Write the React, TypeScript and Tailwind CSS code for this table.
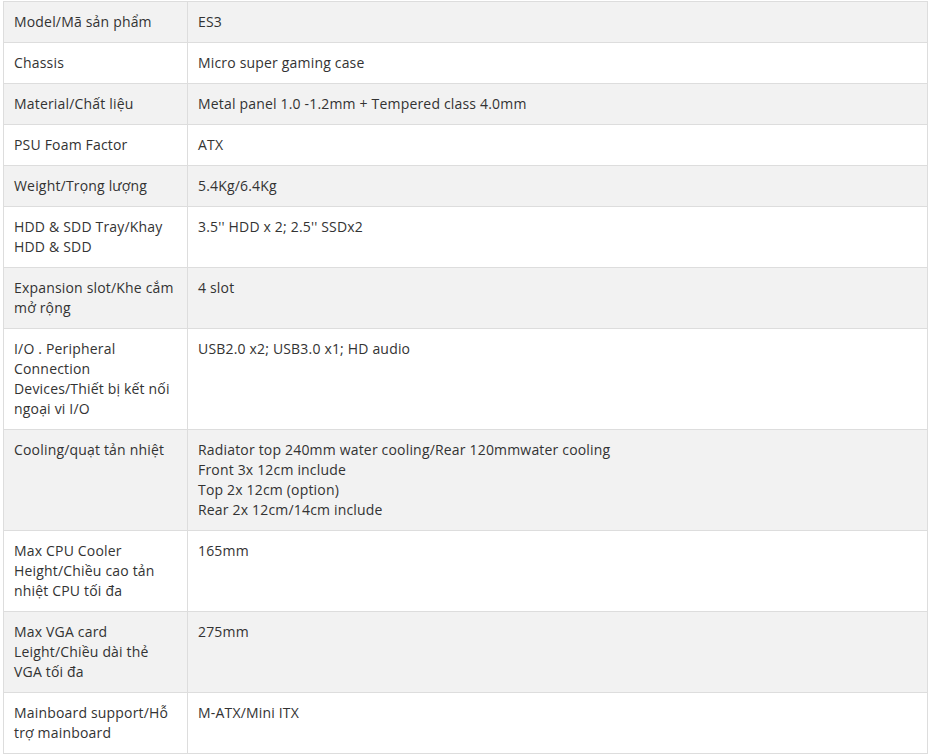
const rows: [string, string[]][] = [
  ["Model/Mã sản phẩm", ["ES3"]],
  ["Chassis", ["Micro super gaming case"]],
  ["Material/Chất liệu", ["Metal panel 1.0 -1.2mm + Tempered class 4.0mm"]],
  ["PSU Foam Factor", ["ATX"]],
  ["Weight/Trọng lượng", ["5.4Kg/6.4Kg"]],
  ["HDD & SDD Tray/Khay HDD & SDD", ["3.5'' HDD x 2; 2.5'' SSDx2"]],
  ["Expansion slot/Khe cắm mở rộng", ["4 slot"]],
  ["I/O . Peripheral Connection Devices/Thiết bị kết nối ngoại vi I/O", ["USB2.0 x2; USB3.0 x1; HD audio"]],
  [
    "Cooling/quạt tản nhiệt",
    [
      "Radiator top 240mm water cooling/Rear 120mmwater cooling",
      "Front 3x 12cm include",
      "Top 2x 12cm (option)",
      "Rear 2x 12cm/14cm include",
    ],
  ],
  ["Max CPU Cooler Height/Chiều cao tản nhiệt CPU tối đa", ["165mm"]],
  ["Max VGA card Leight/Chiều dài thẻ VGA tối đa", ["275mm"]],
  ["Mainboard support/Hỗ trợ mainboard", ["M-ATX/Mini ITX"]],
];

export default function App() {
  return (
    <div className="min-h-screen bg-white pl-[3px] pt-px font-['Open_Sans',sans-serif] text-[14px] leading-5 tracking-[0.18px] text-[#333]">
      <table className="w-[925px] table-fixed border-collapse border border-[#ddd]">
        <colgroup>
          <col className="w-[184px]" />
          <col />
        </colgroup>
        <tbody>
          {rows.map(([label, value], i) => (
            <tr key={label} className={i % 2 === 0 ? "bg-[#f2f2f2]" : "bg-white"}>
              <td className="border border-[#ddd] px-[10px] py-[10px] align-top">{label}</td>
              <td className="border border-[#ddd] px-[10px] py-[10px] align-top">
                {value.map((line) => (
                  <div key={line}>{line}</div>
                ))}
              </td>
            </tr>
          ))}
        </tbody>
      </table>
    </div>
  );
}
